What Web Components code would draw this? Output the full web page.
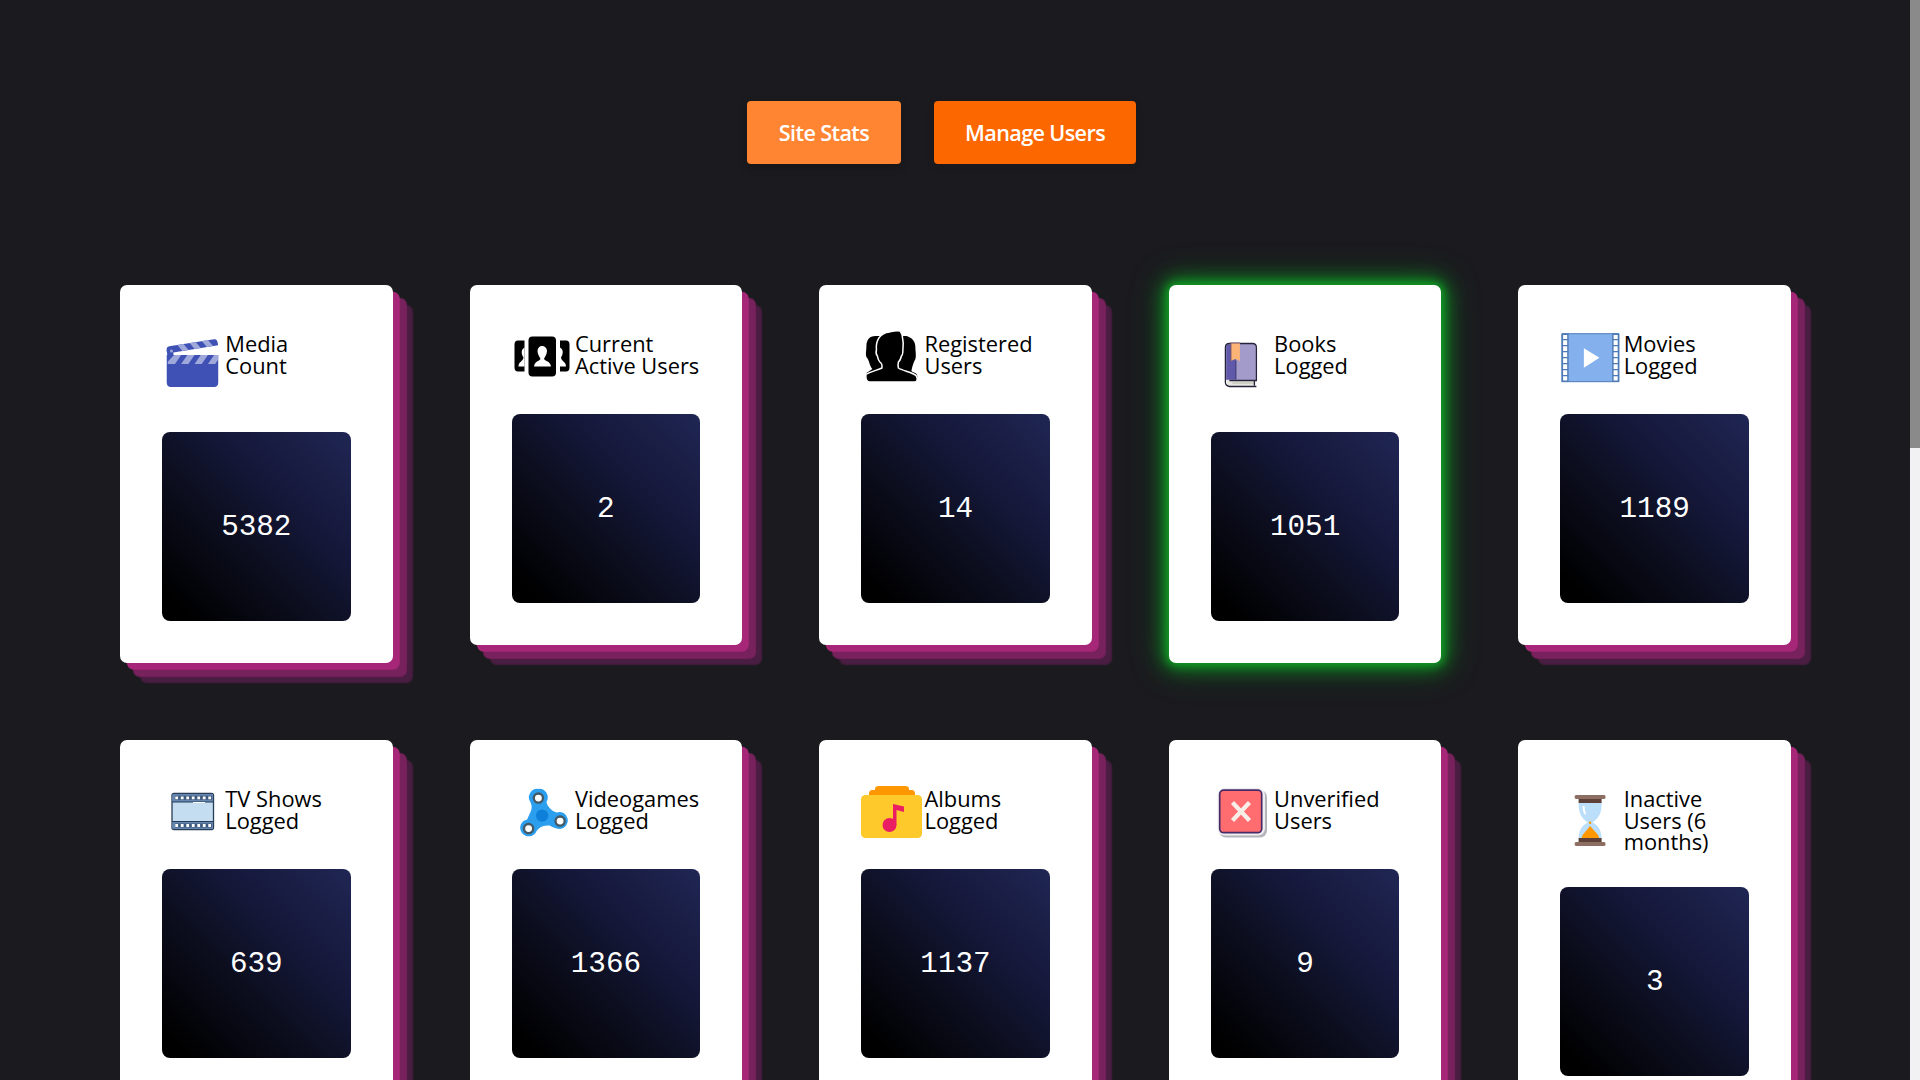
<!DOCTYPE html>
<html lang="en">
<head>
<meta charset="utf-8">
<title>Site Stats</title>
<style>
html,body{margin:0;height:100%;overflow:hidden;background:#1b1b1f}
</style>
</head>
<body>
<stats-page></stats-page>
<script>
const icons = {
clap:`<g transform="translate(3.700 5) scale(1.030 1.100)"><path d="M1 21h50v25q0 4-4 4H5q-4 0-4-4z" fill="#3f51b5"/><path d="M8 21h7l-6 8H2v-2zM21 21h7l-6 8h-7zM34 21h7l-6 8h-7zM47 21h4v4l-3 4h-7z" fill="#9fa8da"/><g transform="translate(0.5 13.500) rotate(-8.500)"><path d="M3 0h44q3 0 3 4v2H0V3q0-3 3-3z" fill="#3f51b5"/><path d="M11-.1h6l4 6.100h-6zM23-.1h6l4 6.100h-6zM35-.1h6l4 6.100h-6z" fill="#9fa8da"/><path d="M0 3h6v6H0z" fill="#3f51b5"/><circle cx="4.5" cy="4.5" r="1.4" fill="#9fa8da"/></g></g>`,
active:`<g transform="translate(0 -1.500)"><path d="M6 15h6.5v31H6q-3.5 0-3.5-4V19q0-4 3.500-4zM48 15h6q3.500 0 3.500 4v23q0 4-3.500 4H48z"/><path d="M12.500 22c-4 2-3 7-1 10-.5 4-5 4-5 9h6zM48 22c4 2 3 7 1 10 .5 4 5 4 5 9h-6z" fill="#fff"/><rect x="16.500" y="11" width="27.500" height="40" rx="4"/><path d="M22 41c1-6 5-5 6.500-7.500-.5-1.500-3-4.500-3-8 0-3 2-5 4.500-5s5 2 5 5c0 3.500-2.500 6.500-3 8 1.500 2.500 6 1.500 7 7.500z" fill="#fff"/></g>`,
group:`<g transform="translate(1.400 -2)"><path d="M13 11C7 11 4 15 4 21c0 5-1 7 0 11 3 3 3 9 6 12l-6 4q0 7 5 7h42q4 0 4-4c-1-4-4-3-6-5 1-4 1-6 4-12 1-4 0-7 0-11 0-7-3-10-9-12z"/><path d="M3.500 49.500c4-2.800 12-4.500 16-6.500.5-3-.5-5-2-6-2-2-2-4-2.500-6-2-2-1.500-4-1-6-1-10 4-17 13-18 3-.7 6-2 11-1 0 2 2 2 2 6 1 4 1 9 .5 13 0 3 0 5-1.500 6-.5 2-1.500 5-3 6-.5 2-.5 4 0 6 4 3 15 4 18 8 1.500 3 1 6-2 6H7q-4 0-3.500-7.500z" fill="#000" stroke="#fff" stroke-width="1.500"/></g>`,
book:`<g transform="translate(3.400 1.500)"><path d="M11.500 18.500q0-3 3-3h24q3 0 3 3v33h-30z" fill="#a39bca"/><path d="M12 18q0-2 2-2h7.500v35H12z" fill="#6058aa"/><path d="M12.500 51.500h28.500v6H13z" fill="#e7e7df"/><path d="M18 54.500h22" stroke="#bbb9aa"/><path d="M42 58H15q-4-1-4-4V19q0-4 4-4h23q4 0 4 4v33H15M40 52v5" fill="none" stroke="#242339" stroke-width="1.300"/><path d="M16.500 14.500h9v18l-4.500-2-4.500 2z" fill="#fbb476"/><path d="M16.500 14.500v18M25.500 14.500H16" fill="none" stroke="#71506b"/><path d="M21.500 32v19" stroke="#3c376d"/></g>`,
film:`<g transform="translate(1.400 -1.300)"><path d="M.5 8h57v48H.5z" fill="#84b1ee" stroke="#4e7ab5"/><path d="M1 8.500h5.500v47H1zM51.500 8.500H57v47h-5.500z" fill="#fff" stroke="#4e7ab5" stroke-width="1.400"/><path d="M1 14h6M1 20h6M1 26h6M1 32h6M1 38h6M1 44h6M1 50h6M51 14h6M51 20h6M51 26h6M51 32h6M51 38h6M51 44h6M51 50h6" stroke="#4e7ab5" stroke-width="1.200"/><path d="M22.500 22.500L38 32 22.500 42z" fill="#fff"/></g>`,
tv:`<g transform="translate(0 -2)"><rect x="10" y="13.500" width="41.500" height="36" rx="2" fill="#c5ddf1" stroke="#283d55" stroke-width="1.300"/><path d="M10.500 14h40.500v8H10.500zM10.500 41.500h40.500V49H10.500z" fill="#6486b0"/><path d="M10 22h41M10 41.500h41" stroke="#283d55"/><path d="M13 17.800h37M13 45.500h37" stroke="#3c587a" stroke-width="4"/><path d="M13.300 17.800h37M13.300 45.500h37" stroke="#fff" stroke-width="2.800" stroke-dasharray="2.800 2.700"/><path d="M31 22.500h12" stroke="#fff"/></g>`,
spin:`<g transform="translate(-.900 -2.400)"><path d="M27 9.300a8.500 8.500 0 0 0-7.500 13.500c2 4.500 1 8-1.500 12.500l-2 4.500a8.500 8.500 0 1 0 9.500 11.500c3.500-4.500 7-5.500 13-5.500 4 2 7 3.500 10.500 3.500a8.500 8.500 0 1 0-3.500-16.500c-5-1.500-9-5.500-10.200-10.500A8.500 8.500 0 0 0 27 9.300z" fill="#2b9fee"/><circle cx="31" cy="36" r="6.200" fill="#0f80da"/><g fill="#fff" stroke="#435966" stroke-width="2.300"><circle cx="27.300" cy="18.500" r="4.600"/><circle cx="49" cy="41.500" r="4.600"/><circle cx="17.500" cy="49" r="4.600"/></g></g>`,
album:`<g transform="translate(0 -2)"><path d="M14 10v-1q0-3 4-3h26q4 0 4 3v1h3q3 0 3 4v2H8v-2q0-4 3-4z" fill="#ff9800"/><rect x="0" y="15" width="61" height="43" rx="4.500" fill="#fec92a"/><circle cx="28.500" cy="45" r="7" fill="#e91e63"/><path d="M32 45V24l11 2.500V32l-7.500-2v15z" fill="#e91e63"/></g>`,
cross:`<g transform="translate(0 -2)"><rect x="8" y="10" width="48" height="47.500" rx="7" fill="#b4b5bb"/><rect x="6.500" y="8" width="47.500" height="47.500" rx="7" fill="#eeeef2"/><rect x="8.700" y="10.200" width="42" height="42.500" rx="4" fill="#ff6d70" stroke="#472b67" stroke-width="1.700"/><path d="M21.500 22.500l17 18M38.500 22.500l-17 18" stroke="#f8eee8" stroke-width="4.300"/></g>`,
glass:`<g transform="translate(1.600 4)"><path d="M17 16.500h23c0 10-2 15-9 20 7 4 9 9 9 17H17c0-8 2-13 9-17-7-5-9-10-9-20z" fill="#bbdefb"/><path d="M22 20q0 6 2 8" stroke="#fff" stroke-width="2" fill="none"/><path d="M28.500 40l8 9 1 3H20l1-3z" fill="#ff9800"/><circle cx="28.500" cy="36.800" r="1.200" fill="#ff9800"/><path d="M17 13h23v4H17zM17 52h23v4H17z" fill="#5d4037"/><path d="M14.500 9h28q1.500 0 1.500 2t-1.500 2h-28q-1.500 0-1.500-2t1.500-2zM14.500 56h28q1.500 0 1.500 2t-1.500 2h-28q-1.500 0-1.500-2t1.500-2z" fill="#8d6e63"/></g>`
};

class NavButton extends HTMLElement{
 constructor(){super();this.attachShadow({mode:'open'}).innerHTML=`<style>
 :host{display:block}
 button{display:block;box-sizing:border-box;width:100%;height:63px;padding:1px 0 0;border:0;border-radius:4px;background:#fd6700;color:#fff;font:600 21.600px/62px "Open Sans",sans-serif;letter-spacing:-.62px;box-shadow:0 2px 8px rgba(0,0,0,.1);white-space:nowrap}
 :host([active]) button{background:#ff8533;box-shadow:0 3px 9px rgba(0,0,0,.25)}
 </style><button><slot></slot></button>`}
}
customElements.define('nav-button',NavButton);

class StatCard extends HTMLElement{
 connectedCallback(){
 const tall=this.hasAttribute('tall');
 this.attachShadow({mode:'open'}).innerHTML=`<style>
 :host{display:block;box-sizing:border-box;width:272.600px;padding:42px;background:#fff;border-radius:7px;
 box-shadow:6.800px 6.800px 0 #a62677,13.300px 13.300px 1px #77215d,20px 20px 1.500px #4a1d42}
 :host([glow]){box-shadow:0 0 8px 2px #12a026,0 0 20px 5px #108b22,0 0 34px 5px rgba(16,120,32,.4)}
 header{display:flex;height:${tall?105:87}px;align-items:flex-start}
 svg{display:block;flex:none;width:64px;height:62px;overflow:visible}
 .label{padding-top:6px;width:132px;margin:0 -7.300px 0 -.700px;font:400 21.850px/21.600px "Open Sans",sans-serif;color:#000;flex:none;white-space:pre-line;}
 .tile{box-sizing:border-box;display:flex;align-items:center;justify-content:center;height:189px;padding-top:3px;border-radius:8px;background:linear-gradient(to top right,#000 8%,#0d0f21 43%,#15183a 66%,#202654);color:#fff;font:29.300px/36px "Liberation Mono",monospace}
 </style><header><svg viewBox="0 0 64 62">${icons[this.getAttribute('icon')]}</svg><div class="label"><slot></slot></div></header><div class="tile"><span>${this.getAttribute('value')}</span></div>`}
}
customElements.define('stat-card',StatCard);

class PageScrollbar extends HTMLElement{
 constructor(){super();this.attachShadow({mode:'open'}).innerHTML=`<style>:host{display:block;width:10px;flex:none;background:#f1f1f3}div{height:448px;background:#8a8a8b}</style><div></div>`}
}
customElements.define('page-scrollbar',PageScrollbar);

const cards=[
['clap','Media\nCount','5382','tall'],['active','Current\nActive Users','2',''],['group','Registered\nUsers','14',''],['book','Books\nLogged','1051','tall glow'],['film','Movies\nLogged','1189',''],
['tv','TV Shows\nLogged','639',''],['spin','Videogames\nLogged','1366',''],['album','Albums\nLogged','1137',''],['cross','Unverified\nUsers','9',''],['glass','Inactive\nUsers (6\nmonths)','3','tall']];
class StatsPage extends HTMLElement{
 constructor(){super();this.attachShadow({mode:'open'}).innerHTML=`<style>
 :host{display:flex;height:1080px;overflow:hidden}
 main{flex:1;min-width:0}
 nav{display:flex;gap:33px;padding:101px 0 121px 747px}
 .a{width:154px}.b{width:202px}
 section{display:grid;grid-template-columns:repeat(5,272.600px);column-gap:77px;row-gap:77px;padding-left:120px;align-items:start}
 </style><main><nav><nav-button class="a" active>Site Stats</nav-button><nav-button class="b">Manage Users</nav-button></nav>
 <section>${cards.map(c=>`<stat-card icon="${c[0]}" value="${c[2]}" ${c[3]}>${c[1]}</stat-card>`).join('')}</section></main><page-scrollbar></page-scrollbar>`}
}
customElements.define('stats-page',StatsPage);
</script>
</body>
</html>
